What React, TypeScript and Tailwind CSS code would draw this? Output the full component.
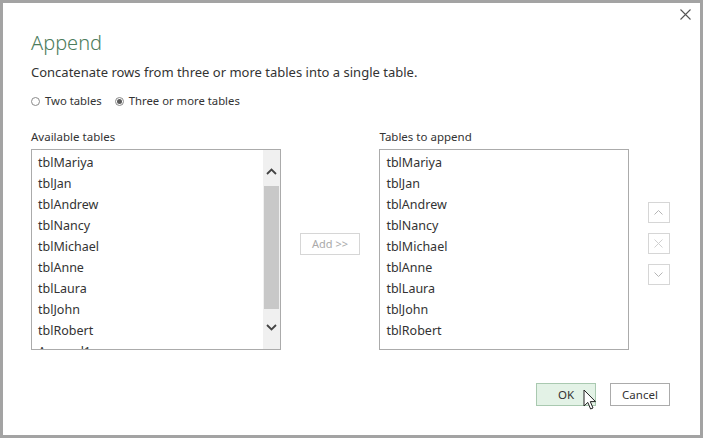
import { useState } from 'react'

const tables = ['tblMariya', 'tblJan', 'tblAndrew', 'tblNancy', 'tblMichael', 'tblAnne', 'tblLaura', 'tblJohn', 'tblRobert', 'Append1']
const appended = tables.slice(0, 9)

function Radio({ checked, label }: { checked: boolean; label: string }) {
  return (
    <label className="flex items-center gap-[5px]">
      <span className="w-[9px] h-[9px] rounded-full border border-[#8a8a8a] bg-white flex items-center justify-center">
        {checked && <span className="w-[5px] h-[5px] rounded-full bg-[#5a5a5a]" />}
      </span>
      <span>{label}</span>
    </label>
  )
}

function SideButton({ children }: { children: React.ReactNode }) {
  return (
    <button className="w-[22px] h-[21px] border border-[#d6d6d6] bg-white flex items-center justify-center">
      {children}
    </button>
  )
}

export default function App() {
  const [mode] = useState('three')
  return (
    <div
      className="w-[703px] h-[438px] bg-white border-[3px] border-[#a3a3a3] text-[#333] text-[12.5px] relative overflow-hidden"
      style={{ fontFamily: '"Noto Sans", "Open Sans", sans-serif' }}
    >
      {/* close */}
      <button className="absolute right-[8px] top-[4px] w-[14px] h-[14px] flex items-center justify-center">
        <svg width="11" height="11" viewBox="0 0 11 11" stroke="#555" strokeWidth="1.1">
          <path d="M0.5 0.5 L10.5 10.5 M10.5 0.5 L0.5 10.5" />
        </svg>
      </button>

      <div className="pl-[28px] pr-[30px] pt-[26px]">
        <h1 className="text-[20px] font-light text-[#4c7c5c] leading-[28px]">Append</h1>
        <p className="mt-[6px] text-[13px] leading-[18px] text-[#333]">Concatenate rows from three or more tables into a single table.</p>

        <div className="mt-[12px] flex items-center gap-[13px] text-[11.3px]">
          <Radio checked={mode === 'two'} label="Two tables" />
          <Radio checked={mode === 'three'} label="Three or more tables" />
        </div>

        <div className="mt-[19px] flex">
          {/* available */}
          <div className="w-[250px]">
            <div className="text-[11.5px] leading-[16px] h-[20px]">Available tables</div>
            <div className="h-[201px] border border-[#ababab] flex overflow-hidden">
              <ul className="flex-1 pl-[6px] pt-[2px] overflow-hidden">
                {tables.map((t) => (
                  <li key={t} className="h-[21px] leading-[21px]">{t}</li>
                ))}
              </ul>
              <div className="w-[17px] bg-[#f0f0f0] flex flex-col items-center">
                <div className="h-[36px] flex justify-center pt-[18px]">
                  <svg width="11" height="7" viewBox="0 0 11 7" fill="none" stroke="#444" strokeWidth="1.8">
                    <path d="M1 6 L5.5 1.5 L10 6" />
                  </svg>
                </div>
                <div className="w-[15px] h-[123px] bg-[#c8c8c8]" />
                <div className="flex justify-center pt-[15px]">
                  <svg width="11" height="7" viewBox="0 0 11 7" fill="none" stroke="#444" strokeWidth="1.8">
                    <path d="M1 1 L5.5 5.5 L10 1" />
                  </svg>
                </div>
              </div>
            </div>
          </div>

          {/* add */}
          <div className="w-[99px] flex items-center justify-center pt-[9px]">
            <button className="w-[60px] h-[22px] border border-[#d6d6d6] bg-white text-[11px] text-[#aaa]">Add &gt;&gt;</button>
          </div>

          {/* to append */}
          <div className="w-[250px]">
            <div className="text-[11.5px] leading-[16px] h-[20px]">Tables to append</div>
            <div className="h-[201px] border border-[#ababab]">
              <ul className="pl-[6px] pt-[2px]">
                {appended.map((t) => (
                  <li key={t} className="h-[21px] leading-[21px]">{t}</li>
                ))}
              </ul>
            </div>
          </div>

          <div className="ml-[19px] pt-[73px] flex flex-col gap-[10px]">
            <SideButton>
              <svg width="9" height="5" viewBox="0 0 9 5" fill="none" stroke="#b5b5b5" strokeWidth="1">
                <path d="M0.5 4.5 L4.5 0.5 L8.5 4.5" />
              </svg>
            </SideButton>
            <SideButton>
              <svg width="9" height="9" viewBox="0 0 9 9" fill="none" stroke="#d0d0d0" strokeWidth="1">
                <path d="M0.5 0.5 L8.5 8.5 M8.5 0.5 L0.5 8.5" />
              </svg>
            </SideButton>
            <SideButton>
              <svg width="9" height="5" viewBox="0 0 9 5" fill="none" stroke="#b5b5b5" strokeWidth="1">
                <path d="M0.5 0.5 L4.5 4.5 L8.5 0.5" />
              </svg>
            </SideButton>
          </div>
        </div>

        <div className="mt-[33px] flex justify-end gap-[14px]">
          <button className="relative w-[60px] h-[23px] border border-[#a9c9b0] bg-[#e3f2e6] text-[11.5px]">
            OK
            <svg className="absolute left-[46px] top-[5px]" width="14" height="22" viewBox="0 0 14 22">
              <path d="M1 1 L1 17 L4.8 13.4 L7.6 20 L10 19 L7.3 12.6 L12.5 12.6 Z" fill="white" stroke="#222" strokeWidth="1" strokeLinejoin="round" />
            </svg>
          </button>
          <button className="w-[60px] h-[23px] border border-[#ababab] bg-white text-[11.5px]">Cancel</button>
        </div>
      </div>
    </div>
  )
}
